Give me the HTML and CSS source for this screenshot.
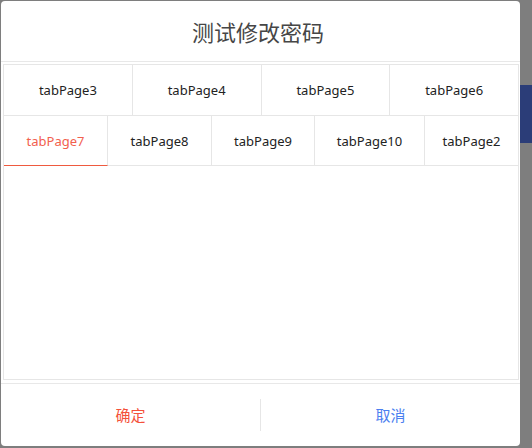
FILE: index.html
```html
<!DOCTYPE html>
<html lang="zh">
<head>
<meta charset="utf-8">
<link rel="stylesheet" href="styles.css">
</head>
<body>
<div class="dialog">
  <div class="header">测试修改密码</div>
  <div class="main">
    <div class="tabs">
      <div class="row row1">
        <div class="tab">tabPage3</div>
        <div class="tab">tabPage4</div>
        <div class="tab">tabPage5</div>
        <div class="tab">tabPage6</div>
      </div>
      <div class="row row2">
        <div class="tab active w104">tabPage7</div>
        <div class="tab w104">tabPage8</div>
        <div class="tab w103">tabPage9</div>
        <div class="tab w110">tabPage10</div>
        <div class="tab grow">tabPage2</div>
      </div>
      <div class="panel"></div>
    </div>
  </div>
  <div class="footer">
    <div class="btn ok">确定</div>
    <div class="sep"></div>
    <div class="btn cancel">取消</div>
  </div>
</div>
</body>
</html>
```
FILE: styles.css
```css
html, body {
  margin: 0;
  padding: 0;
}
body {
  width: 532px;
  height: 448px;
  overflow: hidden;
  background: linear-gradient(#2b3d78, #2b3d78) right 0 top 85px / 12px 58px no-repeat, #7e7e7e;
  font-family: "Noto Sans", "Noto Sans CJK SC", sans-serif;
}
.dialog {
  margin: 1px 0 0 1px;
  width: 519px;
  height: 445px;
  background: #fff;
  border-radius: 4px;
  display: flex;
  flex-direction: column;
}
.header {
  height: 60px;
  line-height: 60px;
  text-align: center;
  font-size: 22px;
  color: #464646;
  border-bottom: 1px solid #e8e8e8;
  font-family: "Noto Sans CJK SC", sans-serif;
  padding-right: 5px;
}
.main {
  padding: 2px 1px 3px 2px;
}
.tabs {
  height: 314px;
  border: 1px solid #e6e6e6;
  display: flex;
  flex-direction: column;
}
.row {
  display: flex;
}
.row1 {
  height: 50px;
  border-bottom: 1px solid #e6e6e6;
}
.row2 {
  height: 50px;
}
.tab {
  display: flex;
  align-items: center;
  justify-content: center;
  font-size: 13px;
  color: #222;
  border-right: 1px solid #e6e6e6;
  box-sizing: border-box;
}
.row1 .tab {
  flex: 1;
}
.row2 .tab {
  border-bottom: 1px solid #e6e6e6;
}
.tab:last-child {
  border-right: none;
}
.w104 { flex: 0 0 104px; }
.w103 { flex: 0 0 103px; }
.w110 { flex: 0 0 110px; }
.grow { flex: 1; }
.tab.active {
  color: #f2604e;
  border-bottom-color: #ef5a3f;
}
.panel {
  flex: 1;
}
.footer {
  border-top: 1px solid #e8e8e8;
  flex: 1;
  display: flex;
  align-items: center;
}
.btn {
  flex: 1;
  text-align: center;
  font-size: 15px;
  font-family: "Noto Sans CJK SC", sans-serif;
  line-height: 20px;
}
.ok {
  color: #f4513b;
}
.cancel {
  color: #4b7ff0;
}
.sep {
  width: 1px;
  height: 32px;
  background: #e6e6e6;
}
```
